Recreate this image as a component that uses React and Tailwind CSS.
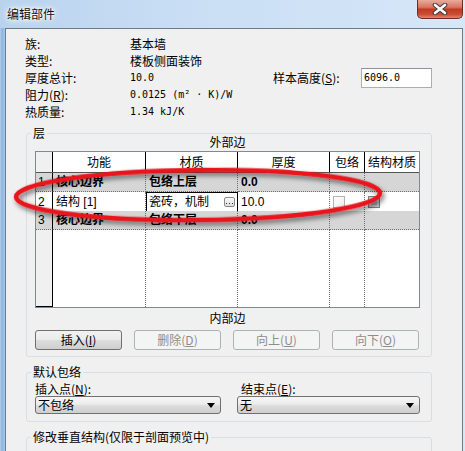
import React from "react";

function U({ children }) {
  return <span className="underline underline-offset-[1px]">{children}</span>;
}

function Dropdown({ text }) {
  return (
    <div className="h-[18px] border border-[#707070] rounded-[3px] bg-[linear-gradient(#f6f6f6,#ececec_45%,#dcdcdc_55%,#cfcfcf)] flex items-center pl-[2px] pr-[5px]">
      <span className="leading-[14px] text-[12px]">{text}</span>
      <svg className="ml-auto" width="8" height="5" viewBox="0 0 8 5">
        <polygon points="0,0 8,0 4,5" fill="#000" />
      </svg>
    </div>
  );
}

function Btn({ children, enabled }) {
  return (
    <div
      className={
        enabled
          ? "w-[87px] h-[20px] rounded-[3px] border border-[#707070] bg-[linear-gradient(#f2f2f2,#ebebeb_48%,#dddddd_52%,#cfcfcf)] flex items-center justify-center text-[12px] leading-[14px] text-black"
          : "w-[87px] h-[20px] rounded-[3px] border border-[#adb2b5] bg-[#f4f4f4] flex items-center justify-center text-[12px] leading-[14px] text-[#8d8d8d]"
      }
    >
      {children}
    </div>
  );
}

const COLS = "grid grid-cols-[17px_93px_92px_92px_35px_54px]";
const cellD =
  "border-r border-b border-dotted border-[#6f6f6f] flex items-center pl-[3px] overflow-hidden whitespace-nowrap";
const cell0 =
  "border-r border-b border-dotted [border-right-style:solid] border-r-black border-b-[#6f6f6f] flex items-center pl-[2px]";

function DataRow({ n, a, b, c, gray, bold }) {
  const bg = gray ? "bg-[#d6d6d6]" : "bg-white";
  const fw = bold ? "font-bold" : "";
  return (
    <div className={`${COLS} h-[19px] ${bg}`}>
      <div className={cell0}>{n}</div>
      <div className={`${cellD} ${fw}`}>{a}</div>
      <div className={`${cellD} ${fw}`}>{b}</div>
      <div className={`${cellD} ${fw}`}>{c}</div>
      <div className={cellD}></div>
      <div className="border-b border-dotted border-[#6f6f6f]"></div>
    </div>
  );
}

export default function App() {
  return (
    <div className="w-[465px] h-[451px] relative overflow-hidden flex flex-col bg-[linear-gradient(90deg,#b9d3ee,#c9def4_40%,#d6e7f8)] font-['Noto_Sans_CJK_SC',sans-serif] text-[12px] text-black">
      {/* title bar */}
      <div className="h-[28px] flex shrink-0">
        <span className="self-center pl-[7px] text-[12px] leading-[16px] text-[#111] [text-shadow:0_0_5px_#fff,0_0_3px_#fff,0_0_8px_#fff]">
          编辑部件
        </span>
        <div className="ml-auto mr-[2px] self-start w-[46px] h-[19px] border border-t-0 border-[#6e2a22] rounded-b-[5px] bg-[linear-gradient(#eaaa9c,#d87662_40%,#c23a20_52%,#c94d35_80%,#dc8a72)] flex items-center justify-center shadow-[0_0_2px_rgba(255,255,255,0.7)]">
          <svg width="16" height="12" viewBox="0 0 16 12">
            <path d="M3 2 L13 10 M13 2 L3 10" stroke="#3d3d3d" strokeWidth="4.6" strokeLinecap="round" />
            <path d="M3 2 L13 10 M13 2 L3 10" stroke="#fff" strokeWidth="2.6" strokeLinecap="round" />
          </svg>
        </div>
      </div>

      {/* frame + client */}
      <div className="flex-1 flex pr-[2px]">
        <div className="w-[5px] shrink-0 bg-[linear-gradient(90deg,#b4d1ef,#8fb3dc_40%,#a9c9ec)]"></div>
        <div className="flex-1 border-l border-t border-r border-[#6d7a88] bg-[#f0f0f0] flex flex-col">
          {/* info */}
          <div className="pt-[6px] pl-[19px] flex flex-col">
            <div className="h-[17px] flex items-center">
              <span className="w-[105px] leading-[14px]">族:</span>
              <span className="leading-[14px]">基本墙</span>
            </div>
            <div className="h-[17px] flex items-center">
              <span className="w-[105px] leading-[14px]">类型:</span>
              <span className="leading-[14px]">楼板侧面装饰</span>
            </div>
            <div className="h-[17px] flex items-center">
              <span className="w-[105px] leading-[14px]">厚度总计:</span>
              <span className="w-[143px] font-['DejaVu_Sans_Mono',monospace] text-[10px] leading-[14px]">10.0</span>
              <span className="w-[88px] leading-[14px]">
                样本高度(<U>S</U>):
              </span>
              <div className="w-[71px] h-[20px] shrink-0 border border-[#abadb3] border-t-[#8e9297] bg-white flex items-center pl-[2px]">
                <span className="font-['DejaVu_Sans_Mono',monospace] text-[10px] leading-[14px]">6096.0</span>
              </div>
            </div>
            <div className="h-[17px] flex items-center">
              <span className="w-[105px] leading-[14px]">
                阻力(<U>R</U>):
              </span>
              <span className="font-['DejaVu_Sans_Mono',monospace] text-[10px] leading-[14px] whitespace-pre">0.0125 (m² · K)/W</span>
            </div>
            <div className="h-[17px] flex items-center">
              <span className="w-[105px] leading-[14px]">热质量:</span>
              <span className="font-['DejaVu_Sans_Mono',monospace] text-[10px] leading-[14px]">1.34 kJ/K</span>
            </div>
          </div>

          {/* layers group */}
          <div className="mt-[13px] ml-[20px] w-[406px] shrink-0 relative border border-[#d5dfe5] rounded-[3px] pt-[1px] pb-[6px] pl-[8px]">
            <span className="absolute top-[-8px] left-[4px] px-[2px] bg-[#f0f0f0] leading-[14px]">层</span>
            <div className="w-[385px] text-center leading-[14px]">外部边</div>
            <div className="mt-[2px] w-[385px] h-[157px] border border-[#828790] bg-white flex flex-col font-['Liberation_Sans','Noto_Sans_CJK_SC',sans-serif]">
              <div className={`${COLS} h-[21px] border-b border-[#555] shrink-0`}>
                <div className="border-r border-black bg-[#f0f0f0]"></div>
                <div className="border-r border-black flex items-center justify-center font-['Noto_Sans_CJK_SC',sans-serif]">功能</div>
                <div className="border-r border-black flex items-center justify-center font-['Noto_Sans_CJK_SC',sans-serif]">材质</div>
                <div className="border-r border-black flex items-center justify-center font-['Noto_Sans_CJK_SC',sans-serif]">厚度</div>
                <div className="border-r border-black flex items-center justify-center font-['Noto_Sans_CJK_SC',sans-serif]">包络</div>
                <div className="flex items-center justify-center font-['Noto_Sans_CJK_SC',sans-serif] whitespace-nowrap">结构材质</div>
              </div>
              <DataRow n="1" a="核心边界" b="包络上层" c="0.0" gray bold />
              <div className={`${COLS} h-[19px] bg-white`}>
                <div className={cell0}>2</div>
                <div className={cellD}>结构 [1]</div>
                <div className="border border-black flex items-center pl-[2px] pr-[2px]">
                  <span>瓷砖，机制</span>
                  <div className="ml-auto w-[11px] h-[10px] border border-[#8a8a8a] rounded-[2px] bg-[linear-gradient(#fafafa,#dcdcdc)] flex items-end justify-center pb-[2px]">
                    <svg width="7" height="1" viewBox="0 0 7 1">
                      <rect x="0" y="0" width="1" height="1" fill="#333" />
                      <rect x="3" y="0" width="1" height="1" fill="#333" />
                      <rect x="6" y="0" width="1" height="1" fill="#333" />
                    </svg>
                  </div>
                </div>
                <div className={cellD}>10.0</div>
                <div className={cellD}>
                  <div className="w-[12px] h-[12px] border border-[#b4b4b4] bg-[linear-gradient(135deg,#ffffff,#ececec)]"></div>
                </div>
                <div className="border-b border-dotted border-[#6f6f6f] flex items-center pl-[3px]">
                  <div className="w-[12px] h-[12px] border border-[#7f7f7f] bg-[#c9ccd3] flex items-center justify-center">
                    <div className="w-[6px] h-[6px] bg-[#a2acb9]"></div>
                  </div>
                </div>
              </div>
              <DataRow n="3" a="核心边界" b="包络下层" c="0.0" gray bold />
              <div className={`${COLS} flex-1`}>
                <div className="border-r border-b border-black bg-[#f0f0f0]"></div>
                <div className="border-r border-dotted border-[#6f6f6f]"></div>
                <div className="border-r border-dotted border-[#6f6f6f]"></div>
                <div className="border-r border-dotted border-[#6f6f6f]"></div>
                <div className="border-r border-dotted border-[#6f6f6f]"></div>
                <div></div>
              </div>
            </div>
            <div className="mt-[3px] w-[385px] text-center leading-[14px]">内部边</div>
            <div className="mt-[5px] w-[385px] flex gap-[12px]">
              <Btn enabled>
                插入(<U>I</U>)
              </Btn>
              <Btn>
                删除(<U>D</U>)
              </Btn>
              <Btn>
                向上(<U>U</U>)
              </Btn>
              <Btn>
                向下(<U>O</U>)
              </Btn>
            </div>
          </div>

          {/* default wrap group */}
          <div className="mt-[15px] ml-[20px] w-[406px] shrink-0 relative border border-[#d5dfe5] rounded-[3px] pt-[9px] pb-[7px] pl-[8px]">
            <span className="absolute top-[-8px] left-[4px] px-[2px] bg-[#f0f0f0] leading-[14px]">默认包络</span>
            <div className="flex gap-[16px]">
              <div className="w-[186px] flex flex-col">
                <span className="leading-[14px]">
                  插入点(<U>N</U>):
                </span>
                <Dropdown text="不包络" />
              </div>
              <div className="w-[183px] flex flex-col">
                <span className="leading-[14px] pl-[4px]">
                  结束点(<U>E</U>):
                </span>
                <Dropdown text="无" />
              </div>
            </div>
          </div>

          {/* vertical structure group */}
          <div className="mt-[15px] ml-[20px] w-[406px] h-[40px] shrink-0 relative border border-[#d5dfe5] rounded-[3px]">
            <span className="absolute top-[-8px] left-[4px] px-[2px] bg-[#f0f0f0] leading-[14px] whitespace-nowrap">
              修改垂直结构(仅限于剖面预览中)
            </span>
          </div>
        </div>
      </div>

      {/* red annotation ellipse */}
      <svg className="absolute inset-0 pointer-events-none" width="465" height="451" viewBox="0 0 465 451">
        <defs>
          <filter id="sh" x="-10%" y="-50%" width="120%" height="200%">
            <feDropShadow dx="2" dy="3" stdDeviation="2.5" floodColor="#000" floodOpacity="0.55" />
          </filter>
        </defs>
        <ellipse
          cx="198"
          cy="195"
          rx="182"
          ry="25"
          transform="rotate(-0.6 198 195)"
          fill="none"
          stroke="#e8131b"
          strokeWidth="4.5"
          filter="url(#sh)"
        />
      </svg>
    </div>
  );
}
